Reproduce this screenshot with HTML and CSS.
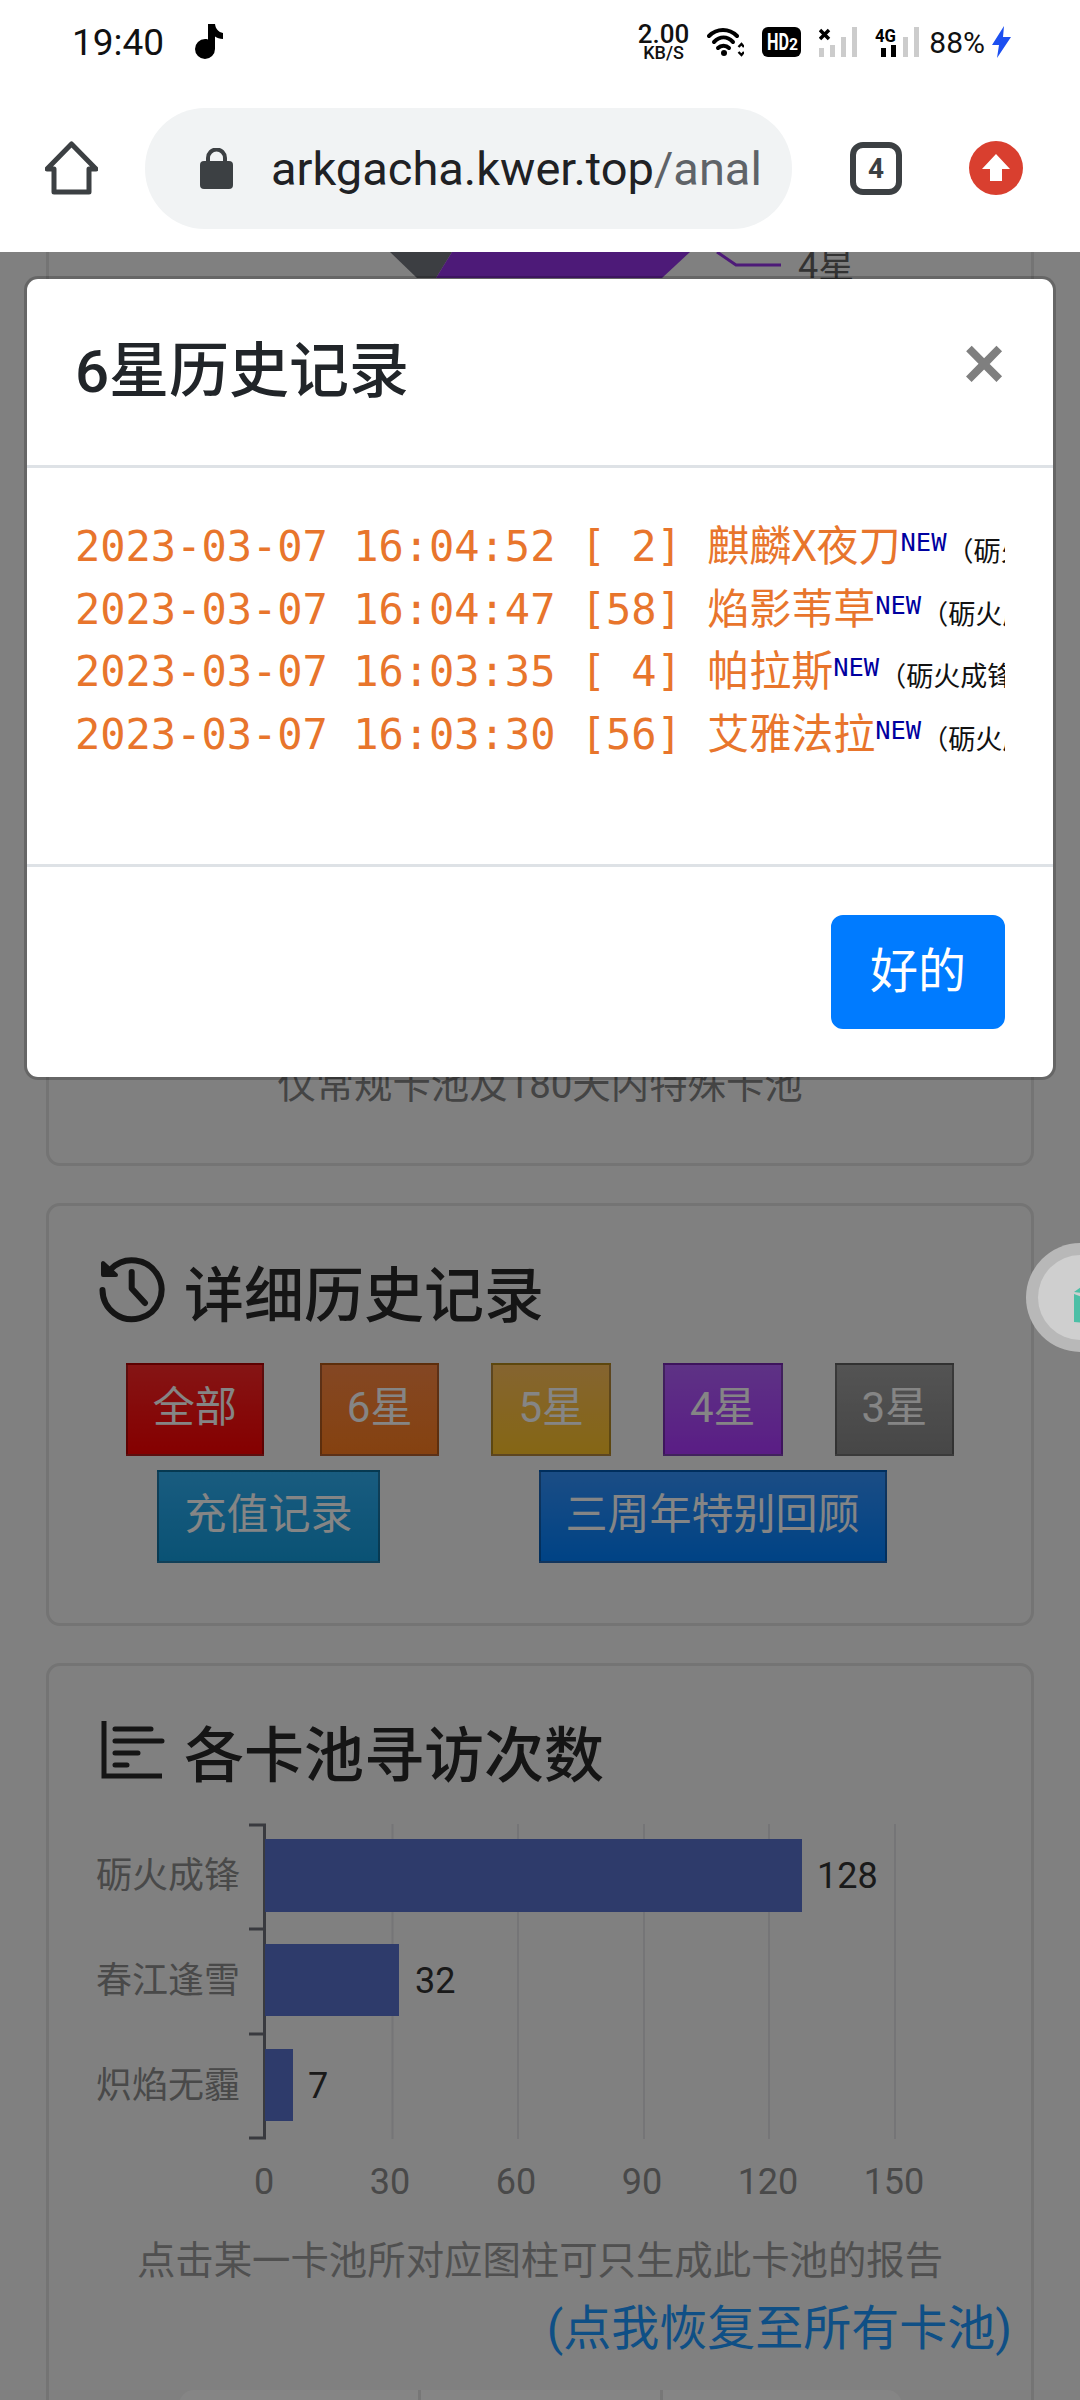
FILE: index.html
```html
<!DOCTYPE html>
<html lang="zh-CN">
<head>
    <meta charset="utf-8">
    <title>arkgacha</title>
    <link rel="stylesheet" href="styles.css">
</head>
<body>
    <header class="chrome">
        <div class="statusbar">
            <span class="clock">19:40</span>
            <svg class="note" width="28" height="36" viewBox="0 0 28 36">
                <path d="M13 0h7c.6 5 3.500 8 8 9v6c-3.200 0-6-1-8-2.500V25a10 10 0 1 1-10-10c1 0 2 .1 3 .4z" fill="#000"/>
            </svg>
            <div class="status-right">
                <div class="speed"><span>2.00</span><span class="speed-unit">KB/S</span></div>
                <svg width="37" height="30" viewBox="0 0 37 30" fill="none" stroke="#000" stroke-width="4" stroke-linecap="round">
                    <path d="M2 9C10 1 22 1 30 9"/>
                    <path d="M7 15C13 9 20 9 26 15"/>
                    <path d="M11 21C14 18 19 18 22 21"/>
                    <circle cx="17" cy="26" r="3" fill="#000" stroke="none"/>
                    <path d="M31.500 20l3-3 2.500 3M31.500 25l3 3 2.500-3" stroke-width="2.400" stroke-linecap="butt"/>
                </svg>
                <svg width="39" height="30" viewBox="0 0 39 30">
                    <rect width="39" height="30" rx="6" fill="#000"/>
                    <text x="5" y="23" class="hd-text" textLength="22" lengthAdjust="spacingAndGlyphs">HD</text>
                    <text x="27" y="23" class="hd-sub" textLength="9" lengthAdjust="spacingAndGlyphs">2</text>
                </svg>
                <svg width="38" height="30" viewBox="0 0 38 30" fill="#ccc">
                    <rect x="0" y="21" width="5" height="9"/>
                    <rect x="11" y="18" width="5" height="12"/>
                    <rect x="22" y="10" width="5" height="20"/>
                    <rect x="33" y="0" width="5" height="30"/>
                    <path d="M1 3l9 9M10 3l-9 9" stroke="#000" stroke-width="3.500"/>
                </svg>
                <svg width="44" height="30" viewBox="0 0 44 30" fill="#ccc">
                    <text x="0" y="15" class="sig-text" textLength="21" lengthAdjust="spacingAndGlyphs">4G</text>
                    <rect x="6" y="21" width="5" height="9" fill="#000"/>
                    <rect x="16" y="18" width="5" height="12" fill="#000"/>
                    <rect x="28" y="10" width="5" height="20"/>
                    <rect x="39" y="0" width="5" height="30"/>
                </svg>
                <span class="battery">88%</span>
                <svg class="bolt" width="19" height="32" viewBox="0 0 19 32">
                    <path d="M12 0L0 19h7L5 32 19 11h-8z" fill="#1c4ff0"/>
                </svg>
            </div>
        </div>
        <div class="toolbar">
            <svg width="53" height="54" viewBox="0 0 53 54" fill="none" stroke="#3c4043" stroke-width="5" stroke-linejoin="round">
                <path d="M26.500 3L2 28h7v23h35V28h7z"/>
            </svg>
            <div class="omnibox">
                <svg width="33" height="41" viewBox="0 0 33 41" fill="#3c4043">
                    <rect y="13" width="33" height="28" rx="4"/>
                    <path d="M8 14V10a8.500 8.500 0 0 1 17 0v4" fill="none" stroke="#3c4043" stroke-width="4"/>
                </svg>
                <div class="url"><span class="host">arkgacha.kwer.top</span>/analysis</div>
            </div>
            <div class="tabs">4</div>
            <svg width="54" height="54" viewBox="0 0 54 54">
                <circle cx="27" cy="27" r="27" fill="#d93f2f"/>
                <path d="M27 13L41 28H33V40H21V28H13z" fill="#fff"/>
            </svg>
        </div>
    </header>

    <main class="page">
        <section class="card card-pie">
            <svg class="pie" width="982" height="60" viewBox="49 252 982 60">
                <polygon points="390,252 452,252 436,278 417,278" fill="#74777f"/>
                <polygon points="452,252 690,252 662,278 436,278" fill="#9432e6"/>
                <polyline points="717,252 736,265 781,265" fill="none" stroke="#9432e6" stroke-width="3"/>
                <text x="798" y="278" class="pie-label">4星</text>
            </svg>
            <p class="caption">仅常规卡池及180天内特殊卡池</p>
        </section>

        <section class="card">
            <h4 class="card-title">
                <svg width="68" height="68" viewBox="7 11 68 68" fill="none" stroke="#2a2a2a" stroke-width="6" stroke-linecap="round" stroke-linejoin="round">
                    <path d="M21 24A29.500 29.500 0 1 1 12.500 45"/>
                    <path d="M13 18V30H26z" fill="#2a2a2a" stroke-width="4"/>
                    <path d="M41.700 27V43.500L55 58"/>
                </svg>
                详细历史记录
            </h4>
            <div class="btn-row">
                <a class="btn btn-all">全部</a>
                <a class="btn btn-six">6星</a>
                <a class="btn btn-five">5星</a>
                <a class="btn btn-four">4星</a>
                <a class="btn btn-three">3星</a>
            </div>
            <div class="btn-row btn-row-wide">
                <a class="btn btn-pay">充值记录</a>
                <a class="btn btn-anniv">三周年特别回顾</a>
            </div>
        </section>

        <section class="card card-chart">
            <h4 class="card-title">
                <svg width="68" height="68" viewBox="0 0 68 68" fill="none" stroke="#2a2a2a" stroke-width="5" stroke-linecap="round">
                    <path d="M7 5V60H65" stroke-linecap="butt" stroke-width="5"/>
                    <path d="M18 13H54M18 25H65M18 37H41M18 49H30"/>
                </svg>
                各卡池寻访次数
            </h4>
            <svg class="chart" width="982" height="410" viewBox="49 1810 982 410">
                <g stroke="#e0e0e4" stroke-width="2">
                    <path d="M392.500 1825V2140M518 1825V2140M644 1825V2140M769 1825V2140M895 1825V2140"/>
                </g>
                <path d="M249 1826H264.500V2139H249M249 1930H264.500M249 2035H264.500" fill="none" stroke="#6e7079" stroke-width="3"/>
                <g fill="#5872ce">
                    <rect x="265" y="1840" width="537" height="73"/>
                    <rect x="265" y="1945" width="134" height="72"/>
                    <rect x="265" y="2050" width="28" height="72"/>
                </g>
                <g class="cat">
                    <text x="240" y="1889">砺火成锋</text>
                    <text x="240" y="1994">春江逢雪</text>
                    <text x="240" y="2099">炽焰无霾</text>
                </g>
                <g class="val">
                    <text x="817" y="1889">128</text>
                    <text x="415" y="1994">32</text>
                    <text x="308" y="2099">7</text>
                </g>
                <g class="tick">
                    <text x="264" y="2195">0</text>
                    <text x="390" y="2195">30</text>
                    <text x="516" y="2195">60</text>
                    <text x="642" y="2195">90</text>
                    <text x="768" y="2195">120</text>
                    <text x="894" y="2195">150</text>
                </g>
            </svg>
            <p class="chart-note">点击某一卡池所对应图柱可只生成此卡池的报告</p>
            <p class="chart-reset"><a>(点我恢复至所有卡池)</a></p>
            <div class="segments">
                <div></div>
                <div></div>
                <div></div>
            </div>
        </section>
    </main>

    <div class="backdrop"></div>

    <div class="bubble">
        <div class="bubble-inner">
            <svg width="42" height="48" viewBox="0 0 42 48" fill="#4cbfa6">
                <polygon points="18,10 25,5 42,0 42,7 39,8 34,12"/>
                <polygon points="18,12 34,18 34,41 18,40"/>
                <rect x="38" y="17" width="4" height="13"/>
                <polygon points="25,45 34,44 34,50"/>
                <rect x="38" y="44" width="4" height="6"/>
            </svg>
        </div>
    </div>

    <div class="modal">
        <div class="modal-header">
            <h5 class="modal-title">6星历史记录</h5>
            <span class="close">×</span>
        </div>
        <div class="modal-body">
            <div class="rec">2023-03-07 16:04:52 [ 2] 麒麟X夜刀<sup>NEW</sup><span class="pool">（砺火成锋）</span></div>
            <div class="rec">2023-03-07 16:04:47 [58] 焰影苇草<sup>NEW</sup><span class="pool">（砺火成锋）</span></div>
            <div class="rec">2023-03-07 16:03:35 [ 4] 帕拉斯<sup>NEW</sup><span class="pool">（砺火成锋）</span></div>
            <div class="rec">2023-03-07 16:03:30 [56] 艾雅法拉<sup>NEW</sup><span class="pool">（砺火成锋）</span></div>
        </div>
        <div class="modal-footer">
            <a class="btn-ok">好的</a>
        </div>
    </div>
</body>
</html>
```

FILE: styles.css
```css
* {
    box-sizing: border-box;
}
body {
    margin: 0;
    width: 1080px;
    height: 2400px;
    overflow: hidden;
    position: relative;
    background: #f5f5f5;
    font-family: Roboto, "Noto Sans CJK SC", sans-serif;
    color: #212529;
}
p, h4, h5 {
    margin: 0;
}

/* phone status bar + browser toolbar */
.chrome {
    height: 252px;
    background: #fff;
}
.statusbar {
    height: 84px;
    display: flex;
    align-items: center;
    padding: 0 69px 0 72px;
}
.clock {
    font-size: 37px;
    color: #111;
}
.note {
    margin-left: 31px;
}
.status-right {
    margin-left: auto;
    display: flex;
    align-items: center;
    gap: 18px;
}
.speed {
    display: flex;
    flex-direction: column;
    align-items: center;
    font-size: 26px;
    font-weight: 500;
    line-height: 20px;
    color: #111;
}
.speed-unit {
    font-size: 18px;
    line-height: 17px;
}
.hd-text, .hd-sub, .sig-text {
    font-family: Roboto, sans-serif;
    font-weight: 700;
}
.hd-text {
    font-size: 24px;
    fill: #fff;
}
.hd-sub {
    font-size: 16px;
    fill: #fff;
}
.sig-text {
    font-size: 19px;
    fill: #000;
}
.battery {
    font-size: 30px;
    color: #111;
    margin-left: -8px;
}
.bolt {
    margin-left: -11px;
}
.toolbar {
    height: 168px;
    display: flex;
    align-items: center;
    padding-left: 45px;
}
.omnibox {
    width: 647px;
    height: 121px;
    margin-left: 47px;
    padding-left: 55px;
    border-radius: 60px;
    background: #f1f3f4;
    display: flex;
    align-items: center;
}
.url {
    width: 490px;
    margin-left: 38px;
    overflow: hidden;
    white-space: nowrap;
    font-size: 47px;
    color: #5f6368;
}
.host {
    color: #202124;
}
.tabs {
    width: 52px;
    height: 53px;
    margin-left: 58px;
    margin-right: 67px;
    border: 6px solid #3c4043;
    border-radius: 13px;
    display: flex;
    align-items: center;
    justify-content: center;
    font-size: 28px;
    font-weight: 700;
    color: #3c4043;
}

/* page under the dialog */
.page {
    display: flex;
    flex-direction: column;
    gap: 37px;
}
.card {
    margin: 0 46px;
    padding: 39px 48px 60px;
    background: transparent;
    border: 3px solid #dedede;
    border-radius: 14px;
}
.card-pie {
    height: 914px;
    padding: 0 0 49px;
    border-top: 0;
    border-radius: 0 0 14px 14px;
    display: flex;
    flex-direction: column;
    justify-content: space-between;
}
.pie {
    display: block;
}
.pie-label {
    font-size: 36px;
    fill: #626262;
}
.caption {
    font-size: 38.400px;
    line-height: 58px;
    text-align: center;
    color: #838383;
}
.card-title {
    display: flex;
    align-items: center;
    gap: 19px;
    height: 90px;
    font-size: 60px;
    font-weight: 500;
    color: #2a2a2a;
}
.btn-row {
    display: flex;
    justify-content: center;
    gap: 52px;
    margin-top: 28px;
}
.btn-row-wide {
    gap: 159px;
    margin-top: 14px;
    padding-right: 36px;
}
.btn {
    height: 93px;
    padding: 0 25px;
    border: 2px solid rgba(0, 0, 0, .3);
    font-size: 42px;
    line-height: 86px;
    color: #fff;
}
.btn-all {
    background: linear-gradient(#ff2828, #ff0000);
    margin-right: 4px;
}
.btn-six {
    background: linear-gradient(#fe8844, #ff7e20);
}
.btn-five {
    background: linear-gradient(#ffc05c, #ffc428);
}
.btn-four {
    background: linear-gradient(#b460ff, #ac38ff);
}
.btn-three {
    background: linear-gradient(#a0a0a0, #888);
}
.btn-pay {
    background: linear-gradient(#30b0f4, #149ee0);
}
.btn-anniv {
    background: linear-gradient(#3494ff, #0080ff);
}
.card-chart {
    padding-bottom: 0;
}
.chart {
    display: block;
    margin: 14px -48px 0;
}
.cat text, .tick text {
    font-size: 36px;
    fill: #8c8c8c;
}
.cat text {
    text-anchor: end;
}
.tick text {
    text-anchor: middle;
}
.val text {
    font-size: 36px;
    fill: #323232;
}
.chart-note {
    margin-top: 13px;
    font-size: 38.400px;
    line-height: 58px;
    text-align: center;
    color: #9a9a9a;
}
.chart-reset {
    margin-top: 10px;
    margin-right: -29px;
    font-size: 48px;
    line-height: 58px;
    text-align: right;
    color: #1d98ff;
}
.segments {
    width: 723px;
    height: 60px;
    margin: 32px auto 0;
    background: #fff;
    border-radius: 15px 15px 0 0;
    display: flex;
}
.segments div {
    flex: 1;
    border-right: 3px solid #e5e5e5;
}
.segments div:last-child {
    border-right: 0;
}

.backdrop {
    position: absolute;
    top: 252px;
    left: 0;
    right: 0;
    bottom: 0;
    background: rgba(0, 0, 0, .48);
}
.bubble {
    position: absolute;
    top: 1243px;
    left: 1026px;
    width: 109px;
    height: 109px;
    padding: 12px;
    border-radius: 50%;
    background: #b8b8b8;
}
.bubble-inner {
    width: 85px;
    height: 85px;
    padding: 27px 0 0 18px;
    border-radius: 50%;
    background: #cfcfcf;
}
.bubble-inner svg {
    display: block;
}

/* dialog */
.modal {
    position: absolute;
    top: 276px;
    left: 24px;
    width: 1032px;
    background: #fff;
    background-clip: padding-box;
    border: 3px solid rgba(0, 0, 0, .2);
    border-radius: 14px;
}
.modal-header {
    height: 189px;
    padding: 48px;
    border-bottom: 3px solid #dee2e6;
    display: flex;
    justify-content: space-between;
    align-items: flex-start;
}
.modal-title {
    font-size: 60px;
    font-weight: 500;
    line-height: 90px;
}
.close {
    font-family: "Liberation Sans", sans-serif;
    font-size: 72px;
    font-weight: 700;
    line-height: 72px;
    color: #7f7f7f;
}
.modal-body {
    height: 396px;
    padding: 48px 48px 0;
}
.rec {
    height: 62.700px;
    line-height: 62.700px;
    overflow: hidden;
    white-space: pre;
    font-family: "DejaVu Sans Mono", "Noto Sans CJK SC", monospace;
    font-size: 42px;
    color: #e8752c;
}
.rec sup {
    font-size: 25.500px;
    line-height: 0;
    vertical-align: 10px;
    color: #0000a0;
}
.pool {
    font-size: 27px;
    color: #111;
}
.modal-footer {
    padding: 48px;
    border-top: 3px solid #dee2e6;
    display: flex;
    justify-content: flex-end;
}
.btn-ok {
    padding: 18px 36px;
    border: 3px solid #007bff;
    border-radius: 12px;
    background: #007bff;
    font-size: 48px;
    line-height: 72px;
    color: #fff;
}
```
